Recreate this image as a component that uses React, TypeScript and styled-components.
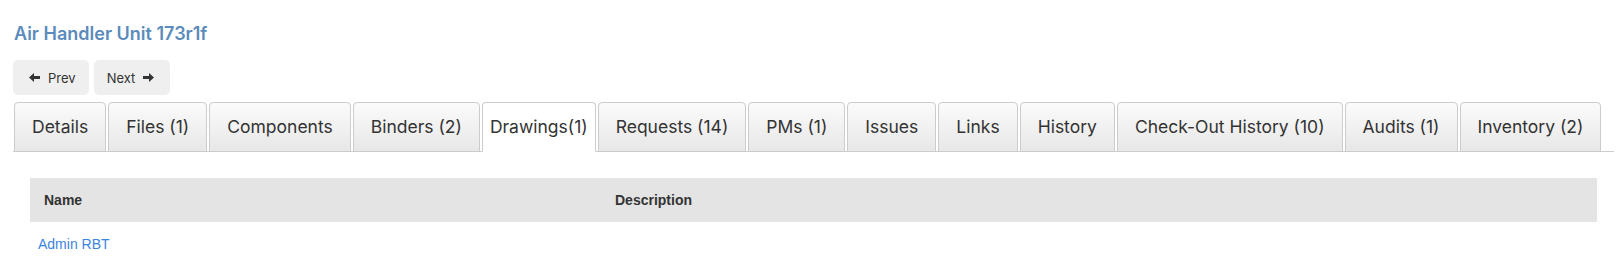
import React from 'react';
import styled, { createGlobalStyle } from 'styled-components';

const GlobalStyle = createGlobalStyle`
  html, body {
    margin: 0;
    padding: 0;
    background: #ffffff;
  }
  body {
    font-family: 'Inter', 'Noto Sans', sans-serif;
    color: #333333;
  }
`;

const Page = styled.div`
  padding: 22px 8px 0 13px;
`;

const Title = styled.h1`
  margin: 0 0 0 1px;
  font-family: 'Inter', sans-serif;
  font-size: 18px;
  line-height: 24px;
  font-weight: 600;
  color: #5b8bbb;
`;

const Pager = styled.div`
  display: flex;
  gap: 5px;
  margin-top: 14px;
`;

const PagerButton = styled.button`
  display: flex;
  align-items: center;
  gap: 8px;
  height: 35px;
  padding: 0 13px 0 16px;
  border: none;
  border-radius: 5px;
  background: #efefef;
  color: #333333;
  font-family: 'Inter', sans-serif;
  font-size: 13px;
  cursor: pointer;

  &:last-child {
    padding: 0 16px 0 13px;
  }
`;

const TabBar = styled.ul`
  display: flex;
  margin: 7px 0 0 0;
  padding: 0 0 0 1px;
  list-style: none;
  border-bottom: 1px solid #cccccc;
`;

const Tab = styled.li<{ $active?: boolean }>`
  margin: 0 2px -1px 0;
  height: 48px;
  line-height: 48px;
  padding: 0 ${({ $active }) => ($active ? '7px' : '17px')};
  border: 1px solid #cccccc;
  border-bottom-color: ${({ $active }) => ($active ? '#ffffff' : '#cccccc')};
  border-radius: 4px 4px 0 0;
  background: ${({ $active }) =>
    $active ? '#ffffff' : 'linear-gradient(to bottom, #fbfbfb 0%, #e7e7e7 100%)'};
  font-family: 'Inter', sans-serif;
  font-size: 17.5px;
  color: #333333;
  white-space: nowrap;
  cursor: pointer;
`;

const Panel = styled.div`
  padding: 26px 17px 0 17px;
`;

const Table = styled.table`
  width: 100%;
  border-collapse: collapse;
  font-family: 'Liberation Sans', Arial, sans-serif;
  font-size: 14px;
`;

const HeadCell = styled.th<{ $width?: number }>`
  ${({ $width }) => ($width ? `width: ${$width}px;` : '')}
  height: 44px;
  padding: 0 14px;
  background: #e4e4e4;
  text-align: left;
  font-weight: bold;
  color: #333333;
`;

const Cell = styled.td`
  height: 44px;
  padding: 0 8px;
  text-align: left;
`;

const DrawingLink = styled.a`
  color: #3b84e0;
  text-decoration: none;
`;

const Arrow: React.FC<{ dir: 'left' | 'right' }> = ({ dir }) => (
  <svg
    width="11"
    height="9"
    viewBox="0 0 11 9"
    style={{ transform: dir === 'right' ? 'scaleX(-1)' : undefined }}
  >
    <polygon points="0,4.5 5,0 5,9" fill="#333333" />
    <rect x="4" y="3" width="7" height="3" fill="#333333" />
  </svg>
);

const tabs = [
  'Details',
  'Files (1)',
  'Components',
  'Binders (2)',
  'Drawings(1)',
  'Requests (14)',
  'PMs (1)',
  'Issues',
  'Links',
  'History',
  'Check-Out History (10)',
  'Audits (1)',
  'Inventory (2)',
];

const App: React.FC = () => (
  <>
    <GlobalStyle />
    <Page>
      <Title>Air Handler Unit 173r1f</Title>
      <Pager>
        <PagerButton>
          <Arrow dir="left" />
          Prev
        </PagerButton>
        <PagerButton>
          Next
          <Arrow dir="right" />
        </PagerButton>
      </Pager>
      <TabBar>
        {tabs.map((label) => (
          <Tab key={label} $active={label === 'Drawings(1)'}>
            {label}
          </Tab>
        ))}
      </TabBar>
      <Panel>
        <Table>
          <thead>
            <tr>
              <HeadCell $width={543}>Name</HeadCell>
              <HeadCell>Description</HeadCell>
            </tr>
          </thead>
          <tbody>
            <tr>
              <Cell>
                <DrawingLink href="#">Admin RBT</DrawingLink>
              </Cell>
              <Cell />
            </tr>
          </tbody>
        </Table>
      </Panel>
    </Page>
  </>
);

export default App;
